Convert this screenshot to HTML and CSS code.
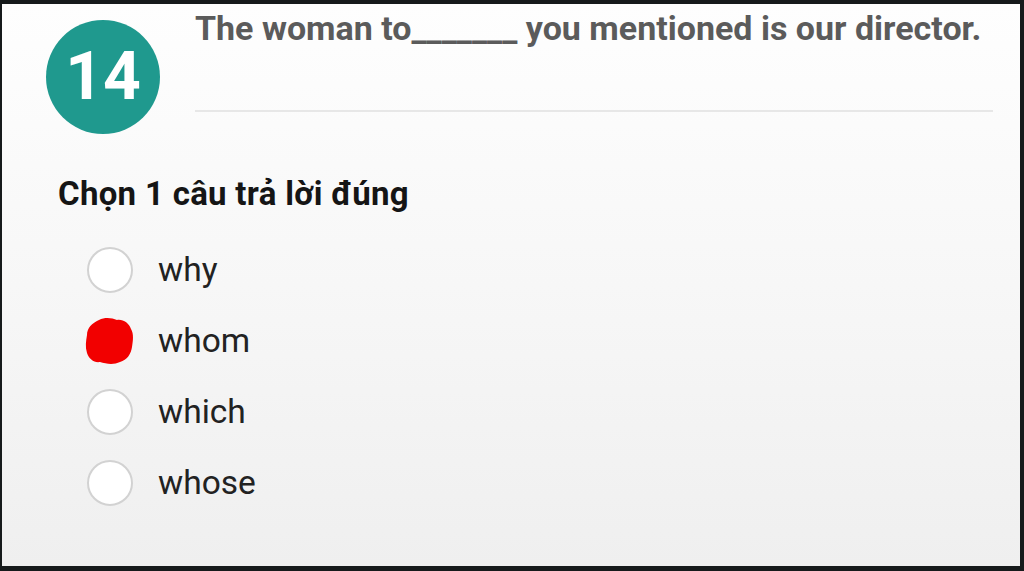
FILE: index.html
```html
<!DOCTYPE html>
<html lang="vi">
<head>
    <meta charset="UTF-8">
    <meta name="viewport" content="width=device-width, initial-scale=1.0">
    <title>Câu hỏi 14</title>
    <link rel="stylesheet" href="styles.css">
</head>
<body>
    <div class="frame">
        <div class="card">
            <div class="question">
                <div class="num">14</div>
                <div class="stem">
                    <p class="stem-text">The woman to_______ you mentioned is our director.</p>
                    <div class="rule"></div>
                </div>
            </div>

            <h2 class="prompt">Chọn 1 câu trả lời đúng</h2>

            <ul class="options">
                <li class="option">
                    <span class="radio"></span>
                    <span class="label">why</span>
                </li>
                <li class="option">
                    <!-- marked answer: red scribble over the radio -->
                    <svg class="mark" width="50" height="48" viewBox="0 0 50 48">
                        <path d="M14 3 C20 0 27 1 32 3 C38 2 44 6 46 12 C49 17 48 24 47 30 C46 37 42 43 35 45 C29 48 21 47 15 45 C9 46 4 42 2 36 C0 30 1 24 2 18 C2 11 7 6 14 3 Z" fill="#f20000"/>
                    </svg>
                    <span class="label">whom</span>
                </li>
                <li class="option">
                    <span class="radio"></span>
                    <span class="label">which</span>
                </li>
                <li class="option">
                    <span class="radio"></span>
                    <span class="label">whose</span>
                </li>
            </ul>
        </div>
    </div>
</body>
</html>
```

FILE: styles.css
```css
* {
    margin: 0;
    padding: 0;
    box-sizing: border-box;
}

body {
    background-color: #121617;
    font-family: Roboto, "Noto Sans", Arial, sans-serif;
}

.frame {
    width: 1024px;
    height: 571px;
    border-style: solid;
    border-color: #161a1b;
    border-width: 4px 4px 5px 2px;
}

.card {
    height: 100%;
    background: linear-gradient(#fefefe 0%, #f7f7f7 50%, #efefef 100%);
}

.question {
    display: flex;
    padding-left: 44px;
}

.num {
    flex: none;
    width: 114px;
    height: 114px;
    margin-top: 16px;
    border-radius: 50%;
    background-color: #1f998e;
    color: #fff;
    font-size: 66px;
    font-weight: 700;
    display: flex;
    align-items: center;
    justify-content: center;
    padding-bottom: 2px;
}

.stem {
    flex: 1;
    margin-left: 35px;
    margin-right: 27px;
    padding-top: 7px;
}

.stem-text {
    font-size: 34px;
    line-height: 34px;
    font-weight: 700;
    color: #5b5b5b;
    white-space: nowrap;
}

.rule {
    height: 2px;
    margin-top: 65px;
    background-color: #e7e7e7;
}

.prompt {
    margin-top: 43px;
    padding-left: 56px;
    font-size: 33px;
    line-height: 33px;
    font-weight: 700;
    color: #151515;
    letter-spacing: 0.3px;
}

.options {
    list-style: none;
    margin-top: 24px;
    padding-left: 85px;
}

.option {
    height: 71px;
    display: flex;
    align-items: center;
}

.radio {
    flex: none;
    width: 46px;
    height: 46px;
    border-radius: 50%;
    border: 2px solid #d2d2d2;
    background-color: #fff;
}

.mark {
    flex: none;
    margin: 0 -2px 0 -2px;
}

.label {
    margin-left: 25px;
    font-size: 33.5px;
    color: #222;
}
```
